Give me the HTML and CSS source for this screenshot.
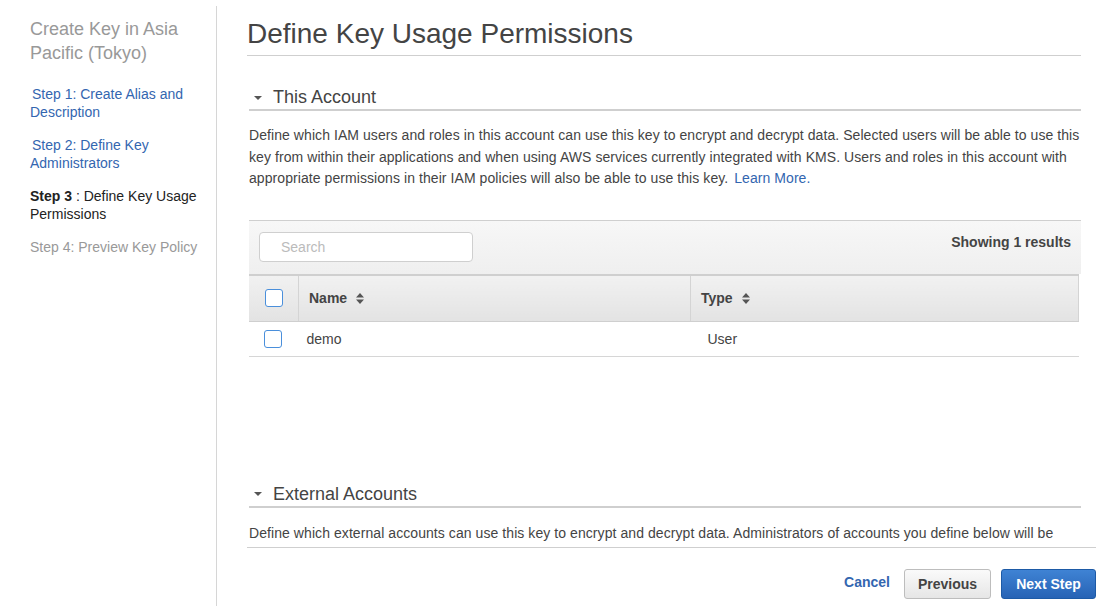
FILE: index.html
```html
<!DOCTYPE html>
<html>
<head>
<meta charset="utf-8">
<link rel="stylesheet" href="styles.css">
</head>
<body>
<div class="page">
  <aside class="sidebar">
    <div class="wizard-title">Create Key in Asia Pacific (Tokyo)</div>
    <ul class="steps">
      <li class="step link"><a>Step 1: Create Alias and Description</a></li>
      <li class="step link"><a>Step 2: Define Key Administrators</a></li>
      <li class="step current"><b>Step 3</b> : Define Key Usage Permissions</li>
      <li class="step future">Step 4: Preview Key Policy</li>
    </ul>
  </aside>
  <main class="main">
    <div class="content">
      <h1 class="page-title">Define Key Usage Permissions</h1>

      <section class="section">
        <h2 class="section-head"><span class="caret"></span>This Account</h2>
        <p class="desc">Define which IAM users and roles in this account can use this key to encrypt and decrypt data. Selected users will be able to use this key from within their applications and when using AWS services currently integrated with KMS. Users and roles in this account with appropriate permissions in their IAM policies will also be able to use this key. <a class="learn">Learn More.</a></p>

        <div class="panel">
          <div class="toolbar">
            <div class="search">Search</div>
            <div class="count">Showing 1 results</div>
          </div>
          <table class="grid">
            <thead>
              <tr>
                <th class="col-check"><span class="checkbox"></span></th>
                <th class="col-name">Name <svg class="sort" width="8" height="11" viewBox="0 0 8 11"><path d="M4 0L8 4.5H0Z M4 11L0 6.5H8Z" fill="#555"/></svg></th>
                <th class="col-type">Type <svg class="sort" width="8" height="11" viewBox="0 0 8 11"><path d="M4 0L8 4.5H0Z M4 11L0 6.5H8Z" fill="#555"/></svg></th>
              </tr>
            </thead>
            <tbody>
              <tr>
                <td class="cell-check"><span class="checkbox"></span></td>
                <td class="cell-name">demo</td>
                <td class="cell-type">User</td>
              </tr>
            </tbody>
          </table>
        </div>
      </section>

      <section class="section external">
        <h2 class="section-head"><span class="caret"></span>External Accounts</h2>
        <p class="desc ext-desc">Define which external accounts can use this key to encrypt and decrypt data. Administrators of accounts you define below will be able to grant permissions to users and roles in their accounts to use this key.</p>
      </section>
    </div>
    <footer class="footer">
      <a class="cancel">Cancel</a>
      <button class="btn btn-default">Previous</button>
      <button class="btn btn-primary">Next Step</button>
    </footer>
  </main>
</div>
</body>
</html>
```

FILE: styles.css
```css
html, body {
  margin: 0;
  padding: 0;
  background: #fff;
  font-family: "Liberation Sans", Arial, sans-serif;
  color: #444;
  overflow: hidden;
}

.page {
  display: flex;
  align-items: flex-start;
  height: 606px;
}

.sidebar {
  box-sizing: border-box;
  width: 217px;
  flex: none;
  margin-top: 6px;
  height: 600px;
  border-right: 1px solid #d6d6d6;
  padding: 11px 14px 0 30px;
}

.wizard-title {
  font-size: 18px;
  line-height: 24px;
  color: #999;
}

.steps {
  list-style: none;
  margin: 20px 0 0;
  padding: 0;
}

.step {
  font-size: 14px;
  line-height: 18px;
  margin-bottom: 15px;
}

.step.link a {
  color: #3366b0;
  display: block;
  text-indent: 2px;
}

.step.current {
  color: #222;
}

.step.future {
  color: #999;
}

.main {
  box-sizing: border-box;
  flex: 1;
  display: flex;
  flex-direction: column;
  padding: 0 10px 0 30px;
  height: 606px;
}

.content {
  flex: 1;
  min-height: 0;
  overflow: hidden;
  padding-right: 15px;
}

.page-title {
  margin: 17px 0 0;
  font-size: 28px;
  line-height: 34px;
  font-weight: normal;
  color: #444;
  padding-bottom: 4px;
  border-bottom: 1px solid #cfcfcf;
}

.section {
  padding-left: 2px;
}

.section-head {
  margin: 29px 0 0;
  display: flex;
  align-items: center;
  font-size: 18px;
  line-height: 24px;
  font-weight: normal;
  color: #444;
  border-bottom: 2px solid #cfcfcf;
}

.caret {
  width: 0;
  height: 0;
  border-left: 4px solid transparent;
  border-right: 4px solid transparent;
  border-top: 4px solid #555;
  margin: 1px 11px 0 5px;
}

.desc {
  margin: 14px 0 0;
  font-size: 14px;
  line-height: 21.5px;
  color: #444;
  letter-spacing: 0.07px;
}

.ext-desc {
  margin-top: 15px;
}

.learn {
  color: #3366b0;
  margin-left: 2px;
}

.panel {
  margin-top: 30px;
  border-top: 1px solid #cfcfcf;
}

.toolbar {
  display: flex;
  justify-content: space-between;
  align-items: flex-start;
  padding: 11px 10px 12px 10px;
  background: linear-gradient(#f7f7f7, #efefef);
}

.search {
  box-sizing: border-box;
  width: 214px;
  height: 30px;
  border: 1px solid #cfcfcf;
  border-radius: 4px;
  background: #fff;
  color: #bbb;
  font-size: 14px;
  line-height: 28px;
  padding-left: 21px;
}

.count {
  font-size: 14px;
  font-weight: bold;
  color: #444;
  line-height: 20px;
}

.grid {
  width: 830px;
  border-collapse: collapse;
  font-size: 14px;
  color: #444;
}

.grid th {
  height: 45px;
  padding: 0 0 0 10px;
  text-align: left;
  font-weight: bold;
  background: linear-gradient(#f1f1f1, #e3e3e3);
  border-top: 2px solid #cfcfcf;
  border-bottom: 1px solid #cfcfcf;
  border-left: 1px solid #d4d4d4;
  border-right: 1px solid #d4d4d4;
}

.grid th.col-check {
  width: 33px;
  padding-left: 16px;
  border-left: none;
}

.grid th.col-name {
  width: 381px;
}

.sort {
  vertical-align: -1px;
  margin-left: 5px;
}

.grid td {
  height: 34px;
  padding: 0;
  border-bottom: 1px solid #d6d6d6;
}

.grid td.cell-check {
  padding-left: 15px;
}

.grid td.cell-name {
  padding-left: 8px;
}

.grid td.cell-type {
  padding-left: 17px;
}

.checkbox {
  display: block;
  box-sizing: border-box;
  width: 18px;
  height: 18px;
  border: 1px solid #4a8fdb;
  border-radius: 3px;
  background: #fff;
}

.external {
  margin-top: 125px;
}

.footer {
  flex: none;
  height: 59px;
  box-sizing: border-box;
  border-top: 1px solid #cfcfcf;
  background: #fff;
  display: flex;
  justify-content: flex-end;
  align-items: flex-start;
  padding-top: 21px;
}

.cancel {
  font-size: 14px;
  font-weight: bold;
  color: #3366b0;
  line-height: 30px;
  margin-right: 14px;
  margin-top: -2px;
}

.btn {
  box-sizing: border-box;
  height: 30px;
  border-radius: 3px;
  font-family: "Liberation Sans", Arial, sans-serif;
  font-size: 14px;
  font-weight: bold;
  padding: 0;
}

.btn-default {
  width: 87px;
  border: 1px solid #bdbdbd;
  background: linear-gradient(#fafafa, #e6e6e6);
  color: #444;
  margin-right: 10px;
}

.btn-primary {
  width: 95px;
  border: 1px solid #1d5aa6;
  background: linear-gradient(#3f83d4, #2763b5);
  color: #fff;
}
```
